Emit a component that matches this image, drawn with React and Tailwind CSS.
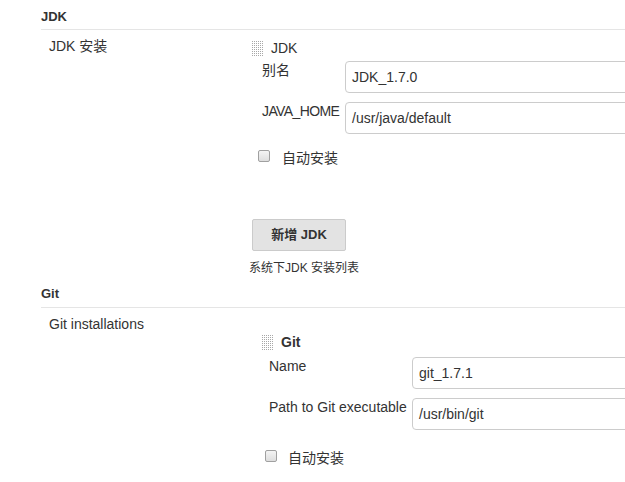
import React from "react";

function Handle() {
  const dots = [];
  for (let y = 0; y < 15; y += 2) {
    for (let x = 0; x < 11; x += 2) {
      dots.push(<rect key={x + "-" + y} x={x} y={y} width="1" height="1" fill="#a8a8a8" />);
    }
  }
  return (
    <svg width="11" height="15" viewBox="0 0 11 15" className="shrink-0">
      {dots}
    </svg>
  );
}

function Checkbox() {
  return (
    <div className="w-[12px] h-[12px] shrink-0 rounded-[2px] border border-[#a0a0a0] bg-gradient-to-b from-[#f4f4f4] to-[#dedede]" />
  );
}

function Field({ label, value, labelW, labelSize = "text-[14px]" }) {
  return (
    <div className="flex">
      <div className={`${labelW} ${labelSize} shrink-0 pt-[1px] leading-[16px] whitespace-nowrap`}>{label}</div>
      <div className="h-[32px] w-[320px] shrink-0 border border-[#cccccc] rounded-[4px] pl-[6px] flex items-center text-[14px] text-[#333]">
        {value}
      </div>
    </div>
  );
}

export default function App() {
  return (
    <div
      className="w-[625px] h-[482px] overflow-hidden bg-white text-[13px] text-[#333]"
      style={{ fontFamily: '"Liberation Sans", Arial, "Noto Sans CJK SC", sans-serif' }}
    >
      {/* JDK section */}
      <div className="ml-[41px] pt-[9px] pb-[5px] leading-[15px] font-bold border-b border-[#e5e5e5]">JDK</div>
      <div className="ml-[41px] flex">
        <div className="w-[211px] shrink-0 pl-[8px] pt-[8px] leading-[16px] text-[14px]">JDK 安装</div>
        <div className="flex-1 pt-[11px]">
          <div className="flex items-center gap-[8px] h-[14px]">
            <Handle />
            <span className="leading-[14px] text-[14px]">JDK</span>
          </div>
          <div className="pl-[10px] mt-[6px]">
            <Field label="别名" value="JDK_1.7.0" labelW="w-[83px]" />
            <div className="mt-[9px]">
              <Field label="JAVA_HOME" value="/usr/java/default" labelW="w-[83px]" labelSize="text-[14px] tracking-[-0.6px]" />
            </div>
          </div>
          <div className="flex items-start ml-[6px] mt-[16px]">
            <Checkbox />
            <span className="ml-[12px] leading-[16px] text-[14px]">自动安装</span>
          </div>
          <button className="mt-[53px] h-[32px] w-[94px] bg-[#e3e3e3] border border-[#cbcbcb] rounded-[2px] font-bold text-[13px] text-[#333] flex items-center justify-center">
            新增 JDK
          </button>
          <div className="-ml-[3px] mt-[9px] text-[12px] leading-[16px]">系统下JDK 安装列表</div>
        </div>
      </div>

      {/* Git section */}
      <div className="ml-[41px] pt-[10px] pb-[6px] leading-[15px] font-bold border-b border-[#e5e5e5]">Git</div>
      <div className="ml-[41px] flex">
        <div className="w-[211px] shrink-0 pl-[8px] pt-[8px] leading-[16px] text-[14px]">Git installations</div>
        <div className="flex-1 pt-[27px] pl-[10px]">
          <div className="flex items-center gap-[8px] h-[15px]">
            <Handle />
            <span className="leading-[15px] font-bold text-[14px]">Git</span>
          </div>
          <div className="pl-[7px] mt-[7px]">
            <Field label="Name" value="git_1.7.1" labelW="w-[143px]" />
            <div className="mt-[9px]">
              <Field label="Path to Git executable" value="/usr/bin/git" labelW="w-[143px]" />
            </div>
          </div>
          <div className="flex items-start ml-[3px] mt-[20px]">
            <Checkbox />
            <span className="ml-[11px] leading-[16px] text-[14px]">自动安装</span>
          </div>
        </div>
      </div>
    </div>
  );
}
